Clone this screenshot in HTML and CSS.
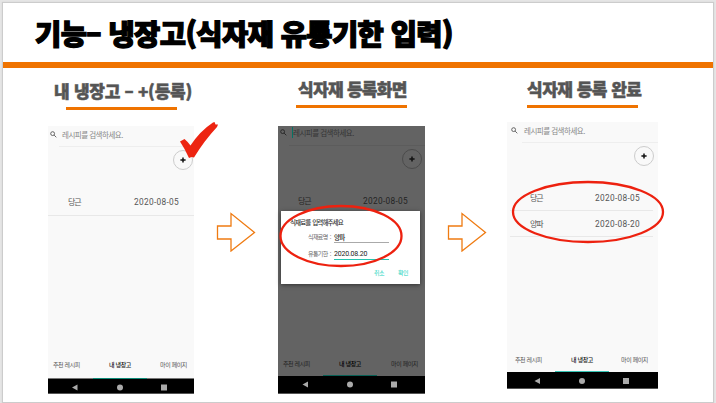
FILE: index.html
```
<!DOCTYPE html>
<html lang="ko">
<head>
<meta charset="utf-8">
<title>기능 - 냉장고</title>
<link rel="stylesheet" href="styles.css">
</head>
<body>
<div class="slide">
  <header class="slide-header"><h1>기능– 냉장고(식자재 유통기한 입력)</h1></header>
  <main class="steps">
    <section class="step step-list">
      <h2><span>내 냉장고 – +(등록)</span></h2>
      <div class="phone">
        <div class="search"><svg class="lens" viewBox="0 0 8 8"><circle cx="3" cy="3" r="2.2"/><path d="M4.7 4.7 7.2 7.2"/></svg><span>레시피를 검색하세요.</span></div>
        <div class="actions"><button class="add"><svg viewBox="0 0 6 6"><path d="M3 .4v5.2M.4 3h5.2"/></svg></button></div>
        <ul class="items"><li><span>당근</span><time>2020-08-05</time></li></ul>
        <nav class="tabs"><span>추천 레시피</span><span class="active">내 냉장고</span><span>마이 페이지</span></nav>
        <div class="navbar"><svg viewBox="0 0 146 16"><path d="M24 8.500 29.500 5.500v6z"/><circle cx="72" cy="8.500" r="3"/><path d="M113 5.500h6v6h-6z"/></svg></div>
      </div>
      <svg class="check" viewBox="0 0 40 38"><path d="M1 19.500 5.500 17Q9 20 11.500 23.500 21 9 34 .500L35.500 0 36.500 2.500 39 2.500 38 5Q25 19 15 35.500L12.500 35 10 36Q6 27 1 19.500Z"/></svg>
    </section>
    <svg class="arrow" viewBox="0 0 40 40"><path d="M1.500 14H15V1.500L38.500 20.500 15 39V27H1.500Z"/></svg>
    <section class="step step-form">
      <h2><span>식자재 등록화면</span></h2>
      <div class="phone dimmed">
        <div class="search"><svg class="lens" viewBox="0 0 8 8"><circle cx="3" cy="3" r="2.2"/><path d="M4.700 4.700 7.200 7.200"/></svg><span class="caret">레시피를 검색하세요.</span></div>
        <div class="actions"><button class="add"><svg viewBox="0 0 6 6"><path d="M3 .4v5.200M.4 3h5.200"/></svg></button></div>
        <ul class="items"><li><span>당근</span><time>2020-08-05</time></li></ul>
        <nav class="tabs"><span>추천 레시피</span><span class="active">내 냉장고</span><span>마이 페이지</span></nav>
        <div class="navbar"><svg viewBox="0 0 146 16"><path d="M24.500 8.500 30 5.500v6z"/><circle cx="72" cy="8.500" r="3"/><path d="M113 5.500h6v6h-6z"/></svg></div>
        <div class="dialog">
          <p class="dialog-title">식재료를 입력해주세요</p>
          <div class="field"><span>식재료명 :</span><b>양파</b></div>
          <div class="field focus"><span>유통기한 :</span><b>2020.08.20</b></div>
          <div class="dialog-actions"><span>취소</span><span>확인</span></div>
        </div>
      </div>
      <svg class="ring ring-form" viewBox="0 0 124 64"><ellipse cx="62" cy="32" rx="60.500" ry="30"/></svg>
    </section>
    <svg class="arrow" viewBox="0 0 40 40"><path d="M1.500 14H15V1.500L38.500 20.500 15 39V27H1.500Z"/></svg>
    <section class="step step-done">
      <h2><span>식자재 등록 완료</span></h2>
      <div class="phone">
        <div class="search"><svg class="lens" viewBox="0 0 8 8"><circle cx="3" cy="3" r="2.200"/><path d="M4.700 4.700 7.200 7.200"/></svg><span>레시피를 검색하세요.</span></div>
        <div class="actions"><button class="add"><svg viewBox="0 0 6 6"><path d="M3 .4v5.200M.4 3h5.200"/></svg></button></div>
        <ul class="items"><li><span>당근</span><time>2020-08-05</time></li><li><span>양파</span><time>2020-08-20</time></li></ul>
        <nav class="tabs"><span>추천 레시피</span><span class="active">내 냉장고</span><span>마이 페이지</span></nav>
        <div class="navbar"><svg viewBox="0 0 146 16"><path d="M24.500 9 30 6v6z"/><circle cx="72" cy="9" r="3"/><path d="M113 6h6v6h-6z"/></svg></div>
      </div>
      <svg class="ring ring-done" viewBox="0 0 154 64"><ellipse cx="77" cy="32" rx="75" ry="30"/></svg>
    </section>
  </main>
</div>
</body>
</html>
```
FILE: styles.css
```
* { box-sizing: border-box; }
body { margin: 0; width: 716px; height: 403px; padding: 3px 3px 1px; overflow: hidden; background: #e5e5e5; font-family: "Noto Sans CJK KR", sans-serif; }
h1, h2, p, ul { margin: 0; padding: 0; }
svg { display: block; }
.slide { height: 399px; background: #fff; box-shadow: 0 0 1px 1px #ccc; }
.slide-header { height: 65px; padding: 13px 0 0 32px; border-bottom: 6px solid #ef7300; }
h1 { font-size: 28.500px; line-height: 34px; font-weight: 900; white-space: nowrap; letter-spacing: -.57px; color: #000; -webkit-text-stroke: 1.300px #000; }
.steps { display: grid; grid-template-columns: 146px 84px 147px 82px 151px; padding-left: 45px; align-items: start; }
.step { position: relative; }
h2 { height: 58px; padding-top: 13px; font-size: 17px; line-height: 20px; font-weight: 900; color: #555; -webkit-text-stroke: .5px #555; white-space: nowrap; }
h2::after { content: ""; display: block; width: 111px; height: 2.500px; background: #ef7300; }
h2 span { display: block; height: 26px; }
.step-list h2 { letter-spacing: -.25px; }
.step-list h2 span { margin-left: 6px; }
.step-list h2::after { margin-left: 18px; }
.step-form h2 { padding-top: 11px; letter-spacing: -.7px; }
.step-form h2 span { margin-left: 20px; }
.step-form h2::after { margin-left: 18px; }
.step-done h2 { height: 54px; padding-top: 11px; letter-spacing: -.5px; }
.step-done h2 span, .step-done h2::after { margin-left: 20px; }
.phone { position: relative; display: flex; flex-direction: column; height: 268px; background: #f9f9f9; }
.search { display: flex; align-items: center; height: 20px; margin-left: 2px; padding-bottom: 3px; font-size: 7.500px; line-height: 11px; letter-spacing: -.5px; color: #888; white-space: nowrap; }
.search .lens { width: 7px; height: 7px; margin-right: 4px; fill: none; stroke: #555; stroke-width: 1; }
.search span { padding-left: 1px; }
.actions { height: 46px; margin-left: 11px; padding: 3px 1.500px 0 0; border-top: 1px solid #eee; }
.add { display: grid; place-items: center; width: 20px; height: 20px; margin-left: auto; padding: 0; border: 1px solid #ccc; border-radius: 50%; background: transparent; }
.add svg { width: 6px; height: 6px; stroke: #111; stroke-width: 1.500; }
.items { list-style: none; }
.items li { display: flex; justify-content: space-between; height: 24px; padding: 5px 15px 0 20px; border-bottom: 1px solid #e8e8e8; font-size: 8px; line-height: 10px; color: #555; }
.items li > span { letter-spacing: -1px; font-size: 8px; }
.items time { font-family: Roboto, sans-serif; font-size: 8.300px; letter-spacing: .3px; }
.tabs { display: grid; grid-template-columns: 45px 54px 1fr; height: 23px; margin-top: auto; font-size: 6px; line-height: 17px; text-align: center; letter-spacing: -.4px; color: #555; white-space: nowrap; }
.tabs span:first-child { padding-left: 5px; text-align: left; }
.tabs span:last-child { padding-right: 7px; text-align: right; }
.tabs .active { color: #111; font-weight: 500; border-bottom: 1px solid #129b88; }
.step-list .tabs { background: linear-gradient(#777, #777) bottom / 100% 1px no-repeat; }
.step-list .tabs .active { border-bottom: 1.500px solid #0d8a78; }
.navbar { height: 15px; background: #000; border-bottom: 1px solid #555; }
.navbar svg { width: 146px; height: 16px; fill: #aaa; }
.arrow { width: 40px; height: 40px; margin: 144px 0 0 22px; fill: none; stroke: #ef7b12; stroke-width: 1.300; }
.check { position: absolute; left: 131px; top: 54px; width: 40px; height: 38px; fill: #ed2411; }
.dimmed { background: #636363; }
.dimmed .search { height: 19px; padding-bottom: 6px; color: #353535; }
.dimmed .lens { stroke: #222; }
.dimmed .caret { border-left: 1px solid #067265; padding-left: 0; margin-left: 1px; }
.dimmed .actions { padding: 2.500px 3px 0 0; border-color: #5c5c5c; }
.dimmed .add { border-color: #4b4b4b; }
.dimmed .items li { padding-right: 17px; border: 0; color: #242424; }
.dimmed .tabs { height: 21px; color: #222; }
.dimmed .tabs .active { border-color: #075f55; color: #000; }
.dimmed .navbar { height: 18px; }
.dialog { position: absolute; left: 3px; top: 85px; width: 139px; height: 73px; padding: 5px 9px; background: #fff; font-size: 7px; color: #333; box-shadow: 0 1px 4px #333; }
.dialog-title { height: 15px; line-height: 12px; font-weight: 500; font-size: 6.500px; letter-spacing: -.9px; word-spacing: 1px; white-space: nowrap; }
.field { display: grid; grid-template-columns: 26px 55px; margin-left: 18px; height: 17px; line-height: 12px; letter-spacing: -.8px; white-space: nowrap; }
.field span { font-size: 6px; letter-spacing: -.6px; word-spacing: 1px; color: #666; }
.field b { height: 12px; font-weight: 500; font-size: 6.500px; color: #222; border-bottom: 1px solid #aaa; }
.field.focus b { border-color: #24c5b0; font-family: Roboto, sans-serif; font-size: 7px; font-weight: 400; letter-spacing: -.2px; }
.dialog-actions { display: flex; justify-content: flex-end; gap: 14px; padding-right: 3px; line-height: 16px; font-size: 6px; letter-spacing: -.5px; color: #25d4be; }
.ring { position: absolute; fill: none; stroke: #ed210f; stroke-width: 2.300; }
.ring-form { left: .5px; top: 136px; width: 124px; height: 64px; }
.ring-done { left: 4px; top: 111.500px; width: 154px; height: 64px; }
.step-done .phone { height: 267px; }
.step-done .search { height: 20px; margin-left: 4px; padding-bottom: 3px; }
.step-done .lens { margin-right: 5px; }
.step-done .actions { margin-left: 15px; padding-right: 4px; height: 43px; }
.step-done .items li { height: 26px; margin: 0 5px 0 3px; padding: 8px 13px 0 20px; }
.step-done .tabs { height: 20px; padding-left: 3px; line-height: 15px; }
.step-done .tabs .active { border-color: #35c4b5; }
.step-done .tabs span:last-child { padding-right: 10px; }
.step-done .navbar { height: 17px; padding-left: 3px; }
```
